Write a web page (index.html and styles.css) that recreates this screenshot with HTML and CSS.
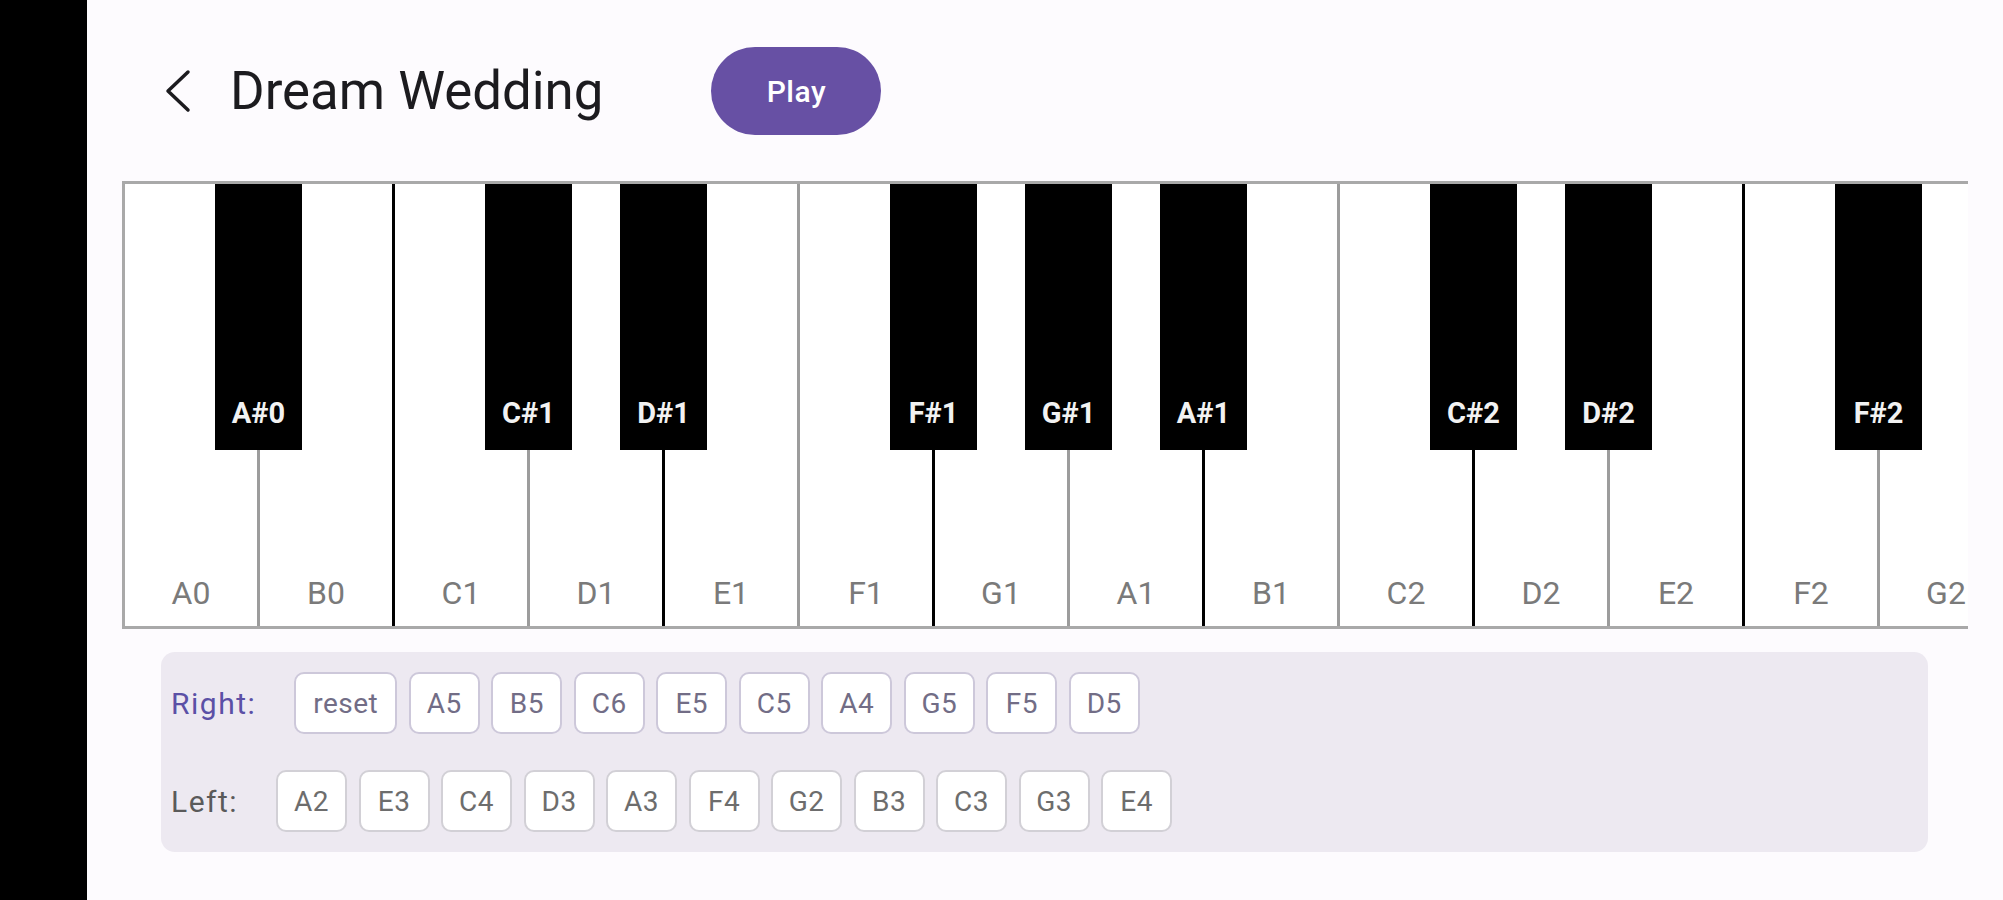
FILE: index.html
```html
<!DOCTYPE html>
<html lang="en">
<head>
<meta charset="utf-8">
<title>Dream Wedding</title>
<link rel="stylesheet" href="styles.css">
</head>
<body>
<div class="app">
  <aside class="sidebar"></aside>
  <main class="main">
    <header class="header">
      <svg class="back" width="28" height="44" viewBox="0 0 28 44" aria-hidden="true">
        <polyline points="24,3 4,22 24,41" fill="none" stroke="#1c1b1f" stroke-width="3.5" stroke-linecap="round" stroke-linejoin="round"/>
      </svg>
      <h1 class="title">Dream Wedding</h1>
      <button class="play">Play</button>
    </header>

    <div class="piano">
      <div class="wkey"><span class="wlabel">A0</span><div class="bkey"><span>A#0</span></div></div>
      <div class="wkey dark"><span class="wlabel">B0</span></div>
      <div class="wkey"><span class="wlabel">C1</span><div class="bkey"><span>C#1</span></div></div>
      <div class="wkey dark"><span class="wlabel">D1</span><div class="bkey"><span>D#1</span></div></div>
      <div class="wkey"><span class="wlabel">E1</span></div>
      <div class="wkey dark"><span class="wlabel">F1</span><div class="bkey"><span>F#1</span></div></div>
      <div class="wkey"><span class="wlabel">G1</span><div class="bkey"><span>G#1</span></div></div>
      <div class="wkey dark"><span class="wlabel">A1</span><div class="bkey"><span>A#1</span></div></div>
      <div class="wkey"><span class="wlabel">B1</span></div>
      <div class="wkey dark"><span class="wlabel">C2</span><div class="bkey"><span>C#2</span></div></div>
      <div class="wkey"><span class="wlabel">D2</span><div class="bkey"><span>D#2</span></div></div>
      <div class="wkey dark"><span class="wlabel">E2</span></div>
      <div class="wkey"><span class="wlabel">F2</span><div class="bkey"><span>F#2</span></div></div>
      <div class="wkey dark"><span class="wlabel">G2</span></div>
    </div>

    <section class="panel">
      <div class="row right">
        <span class="hand">Right:</span>
        <div class="chips">
          <span class="chip wide">reset</span>
          <span class="chip">A5</span>
          <span class="chip">B5</span>
          <span class="chip">C6</span>
          <span class="chip">E5</span>
          <span class="chip">C5</span>
          <span class="chip">A4</span>
          <span class="chip">G5</span>
          <span class="chip">F5</span>
          <span class="chip">D5</span>
        </div>
      </div>
      <div class="row left">
        <span class="hand">Left:</span>
        <div class="chips">
          <span class="chip">A2</span>
          <span class="chip">E3</span>
          <span class="chip">C4</span>
          <span class="chip">D3</span>
          <span class="chip">A3</span>
          <span class="chip">F4</span>
          <span class="chip">G2</span>
          <span class="chip">B3</span>
          <span class="chip">C3</span>
          <span class="chip">G3</span>
          <span class="chip">E4</span>
        </div>
      </div>
    </section>
  </main>
</div>
</body>
</html>
```

FILE: styles.css
```css
* { box-sizing: border-box; }

html, body {
  margin: 0;
  padding: 0;
  background: #fdfbfe;
  font-family: Roboto, "Liberation Sans", sans-serif;
}

.app {
  display: flex;
  width: 2003px;
  height: 900px;
  overflow: hidden;
}

.sidebar {
  flex: none;
  width: 87px;
  background: #000;
}

.main {
  flex: 1;
  min-width: 0;
  padding: 47px 0 0 35px;
  overflow: hidden;
}

/* Header */
.header {
  display: flex;
  align-items: center;
  height: 88px;
  padding-left: 42px;
}

.back {
  flex: none;
  display: block;
}

.title {
  margin: 0 0 0 38px;
  font-size: 52.8px;
  font-weight: 400;
  line-height: 1;
  color: #1c1b1f;
  white-space: nowrap;
}

.play {
  margin-left: 108px;
  width: 170px;
  height: 88px;
  border: none;
  border-radius: 44px;
  background: #6750a4;
  color: #fff;
  font-family: Roboto, "Liberation Sans", sans-serif;
  font-size: 30px;
  font-weight: 500;
  letter-spacing: 0.5px;
}

/* Piano */
.piano {
  display: flex;
  width: 1846px;
  height: 448px;
  margin-top: 46px;
  background: #fff;
  border: 3px solid #a9a9a9;
  border-right: none;
  overflow: hidden;
}

.wkey {
  position: relative;
  flex: none;
  width: 135px;
  height: 100%;
  border-right: 3px solid #9c9c9c;
  display: flex;
  flex-direction: column;
  justify-content: flex-end;
  align-items: center;
  padding-bottom: 15px;
}

.wkey.dark {
  border-right-color: #000;
}

.wlabel {
  font-size: 32px;
  line-height: 36px;
  color: #7a7a7a;
}

.bkey {
  position: absolute;
  z-index: 2;
  top: -3px;
  left: 90px;
  width: 87px;
  height: 269px;
  background: #000;
  display: flex;
  flex-direction: column;
  justify-content: flex-end;
  align-items: center;
  padding-bottom: 21px;
}

.bkey span {
  font-size: 29px;
  line-height: 32px;
  font-weight: 700;
  color: #f2f2f2;
}

/* Panel */
.panel {
  width: 1767px;
  margin: 23px 0 0 39px;
  padding: 20px 10px;
  background: #ede9f1;
  border-radius: 14px;
  display: flex;
  flex-direction: column;
  gap: 36px;
}

.row {
  display: flex;
  align-items: center;
}

.hand {
  font-size: 30px;
  letter-spacing: 1.5px;
  margin-right: 38px;
}

.right .hand { color: #5b50a6; }
.left .hand { color: #5a5a5a; }

.chips {
  display: flex;
  gap: 11.5px;
}

.chip {
  display: flex;
  align-items: center;
  justify-content: center;
  flex: none;
  width: 71px;
  height: 62px;
  background: #fff;
  border: 2px solid #cdc8da;
  border-radius: 10px;
  font-size: 28px;
  letter-spacing: 0.5px;
}

.chip.wide {
  width: auto;
  padding: 0 17px;
}

.right .chip { color: #726d86; }
.left .chip { color: #6d6d6d; border-color: #d2d0d6; }
```
